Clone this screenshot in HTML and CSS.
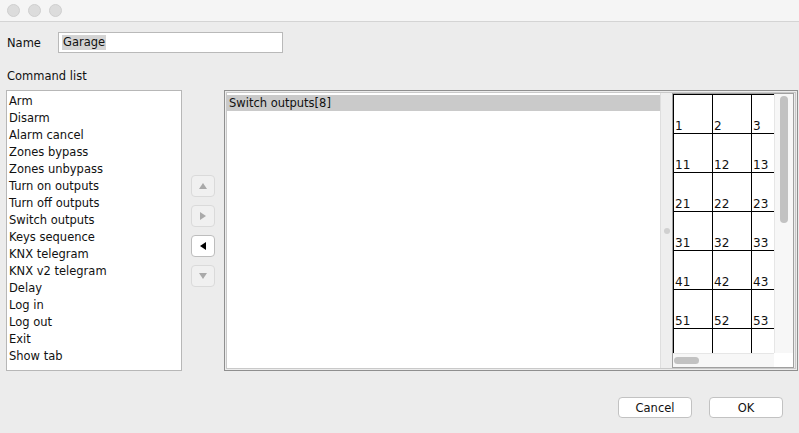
FILE: index.html
```html
<!DOCTYPE html>
<html>

    <head>
        <title>Garage</title>
        <link rel="stylesheet" href="styles.css">
    </head>

    <body>
        <div class="titlebar">
            <span class="light"></span>
            <span class="light"></span>
            <span class="light"></span>
        </div>

        <div class="content">
            <div class="name-row">
                <label for="name">Name</label>
                <div class="field"><span class="selected-text">Garage</span></div>
            </div>

            <div class="section-label">Command list</div>

            <div class="main">
                <ul class="commands">
                    <li>Arm</li>
                    <li>Disarm</li>
                    <li>Alarm cancel</li>
                    <li>Zones bypass</li>
                    <li>Zones unbypass</li>
                    <li>Turn on outputs</li>
                    <li>Turn off outputs</li>
                    <li>Switch outputs</li>
                    <li>Keys sequence</li>
                    <li>KNX telegram</li>
                    <li>KNX v2 telegram</li>
                    <li>Delay</li>
                    <li>Log in</li>
                    <li>Log out</li>
                    <li>Exit</li>
                    <li>Show tab</li>
                </ul>

                <div class="arrows">
                    <button class="arrow" disabled>
                        <svg width="10" height="8" viewBox="0 0 10 8"><polygon points="5,1 9,7 1,7"/></svg>
                    </button>
                    <button class="arrow" disabled>
                        <svg width="8" height="10" viewBox="0 0 8 10"><polygon points="1,1 7,5 1,9"/></svg>
                    </button>
                    <button class="arrow active">
                        <svg width="8" height="10" viewBox="0 0 8 10"><polygon points="7,1 1,5 7,9"/></svg>
                    </button>
                    <button class="arrow" disabled>
                        <svg width="10" height="8" viewBox="0 0 10 8"><polygon points="1,1 9,1 5,7"/></svg>
                    </button>
                </div>

                <div class="split">
                    <ul class="chosen">
                        <li class="current">Switch outputs[8]</li>
                    </ul>

                    <div class="divider"><span class="grip"></span></div>

                    <div class="outputs">
                        <div class="viewport">
                            <div class="grid" id="grid"></div>
                        </div>
                        <div class="vbar"><span class="thumb"></span></div>
                        <div class="hbar"><span class="thumb"></span></div>
                        <div class="corner"></div>
                    </div>
                </div>
            </div>

            <div class="footer">
                <button class="btn">Cancel</button>
                <button class="btn">OK</button>
            </div>
        </div>

        <script>
            // output cells: 10 per row, numbered row*10 + col + 1
            var grid = document.getElementById("grid");
            for (var r = 0; r < 14; r++) {
                for (var c = 0; c < 10; c++) {
                    var cell = document.createElement("div");
                    cell.className = "cell";
                    cell.innerHTML = r * 10 + c + 1;
                    grid.appendChild(cell);
                }
            }
        </script>
    </body>

</html>
```

FILE: styles.css
```css
body {
  margin: 0;
  background-color: #ececec;
  font-family: "DejaVu Sans", sans-serif;
  font-size: 11.5px;
  color: #111;
}

ul {
  list-style: none;
  margin: 0;
  padding: 0;
}

.titlebar {
  height: 21px;
  background-color: #f5f5f5;
  border-bottom: 1px solid #d4d4d4;
  display: flex;
  align-items: center;
  padding-left: 7px;
  gap: 8px;
}

.light {
  width: 11px;
  height: 11px;
  border-radius: 50%;
  background-color: #dcdcdc;
  border: 1px solid #cfcfcf;
}

.content {
  padding: 0 1px 0 6px;
}

.name-row {
  display: flex;
  align-items: center;
  margin-top: 10px;
  height: 21px;
}

.name-row label {
  width: 51px;
  padding-left: 1px;
}

.field {
  width: 220px;
  height: 19px;
  background: white;
  border: 1px solid #b9b9b9;
  display: flex;
  align-items: center;
  padding-left: 3px;
}

.selected-text {
  background-color: #d4d4d4;
  line-height: 15px;
  padding: 0 1px;
}

.section-label {
  margin-top: 15px;
  line-height: 17px;
  padding-left: 1px;
}

.main {
  display: flex;
  margin-top: 5px;
  height: 281px;
}

.commands {
  width: 174px;
  background: white;
  border: 1px solid #b7b7b7;
  padding-top: 2px;
}

.commands li {
  height: 17px;
  line-height: 17px;
  padding-left: 2px;
}

.arrows {
  width: 42px;
  display: flex;
  flex-direction: column;
  justify-content: center;
  padding-left: 9px;
  box-sizing: border-box;
  gap: 8px;
}

.arrow {
  width: 24px;
  height: 22px;
  padding: 0;
  border: 1px solid #dadada;
  border-radius: 4px;
  background-color: #f0f0f0;
  display: flex;
  align-items: center;
  justify-content: center;
}

.arrow svg {
  fill: #a9a9a9;
}

.arrow.active {
  background-color: white;
  border-color: #bdbdbd;
}

.arrow.active svg {
  fill: #000;
}

.split {
  flex: 1;
  display: flex;
  border: 1px solid #8f8f8f;
  box-shadow: inset 0 0 0 1px #ececec, inset 0 0 0 2px #c9c9c9;
  padding: 2px 3px 2px 2px;
}

.chosen {
  flex: 1;
  background: white;
  padding-top: 2px;
}

.chosen li {
  height: 16px;
  line-height: 16px;
  padding-left: 2px;
}

.chosen li.current {
  background-color: #cacaca;
}

.divider {
  width: 11px;
  background-color: #eeeeee;
  border-left: 1px solid #dedede;
  display: flex;
  align-items: center;
  justify-content: center;
}

.grip {
  width: 6px;
  height: 6px;
  border-radius: 50%;
  background-color: #d0d0d0;
}

.outputs {
  box-sizing: border-box;
  width: 122px;
  border: 1px solid #a0a0a0;
  display: grid;
  grid-template-columns: 1fr 19px;
  grid-template-rows: 1fr 14px;
}

.viewport {
  overflow: hidden;
  background: white;
}

.grid {
  display: grid;
  grid-template-columns: repeat(10, 39px);
  grid-auto-rows: 39px;
  border-left: 1px solid #000;
  border-top: 1px solid #000;
  width: max-content;
}

.cell {
  border-right: 1px solid #000;
  border-bottom: 1px solid #000;
  display: flex;
  align-items: flex-end;
  font-size: 12px;
  line-height: 13px;
  padding-left: 1px;
}

.vbar {
  background-color: #f7f7f7;
  border-left: 1px solid #e6e6e6;
  padding: 2px 5px;
}

.vbar .thumb {
  display: block;
  height: 127px;
  border-radius: 4px;
  background-color: #c2c2c2;
}

.hbar {
  background-color: #f7f7f7;
  border-top: 1px solid #e6e6e6;
  padding: 3px 1px;
}

.hbar .thumb {
  display: block;
  width: 25px;
  height: 7px;
  border-radius: 4px;
  background-color: #c2c2c2;
}

.corner {
  background: white;
}

.footer {
  display: flex;
  justify-content: flex-end;
  gap: 17px;
  margin-top: 26px;
  padding-right: 15px;
}

.btn {
  height: 21px;
  width: 74px;
  padding: 0;
  font-family: "DejaVu Sans", sans-serif;
  font-size: 11.5px;
  color: #111;
  background: white;
  border: 1px solid #c2c2c2;
  border-radius: 4px;
}
```
